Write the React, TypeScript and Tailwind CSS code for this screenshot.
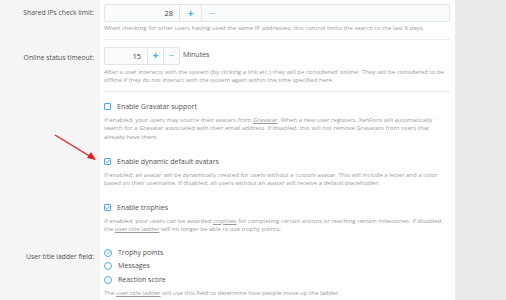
const font = "font-['Segoe_UI','Open_Sans','Noto_Sans',sans-serif]";

const Label = ({ children }: { children?: React.ReactNode }) => (
  <div className="w-[100px] shrink-0 bg-[#f5f5f5] pr-[6px] text-right text-[6.8px] text-[#505050]">{children}</div>
);

const Desc = ({ children, className = "" }: { children: React.ReactNode; className?: string }) => (
  <p className={`text-[6.05px] leading-[8.6px] text-[#9a9a9a] ${className}`}>{children}</p>
);

const U = ({ children }: { children: React.ReactNode }) => (
  <span className="inline-block h-[8.6px] leading-[8.6px] underline">{children}</span>
);

const Check = ({ on }: { on?: boolean }) => (
  <span className="flex h-[7px] w-[7px] items-center justify-center rounded-[1px] border border-[#47a7eb] bg-white">
    {on && (
      <svg viewBox="0 0 8 8" className="h-[5px] w-[5px]">
        <path d="M1 4.2 L3.2 6.2 L7 1.8" fill="none" stroke="#47a7eb" strokeWidth="1.4" />
      </svg>
    )}
  </span>
);

const Radio = ({ on }: { on?: boolean }) => (
  <span className="flex h-[8px] w-[8px] items-center justify-center rounded-full border border-[#47a7eb] bg-white">
    {on && (
      <svg viewBox="0 0 8 8" className="h-[5px] w-[5px]">
        <path d="M1.2 4.2 L3.2 6 L6.8 2" fill="none" stroke="#47a7eb" strokeWidth="1.3" />
      </svg>
    )}
  </span>
);

const Spinner = ({ value, numW, btnW }: { value: string; numW: string; btnW: string }) => (
  <div className="flex h-[18px] rounded-[2px] border border-[#e1e4e9] bg-[#fafbfd] text-[7.5px]">
    <div className={`${numW} pr-[6px] text-right leading-[16px] text-[#404040]`}>{value}</div>
    <div className={`${btnW} flex items-center justify-center border-l border-[#e1e4e9] text-[10px] font-bold text-[#47a7eb]`}>+</div>
    <div className={`${btnW} flex items-center justify-center border-l border-[#e1e4e9] text-[10px] font-bold text-[#9fcdf0]`}>−</div>
  </div>
);

export default function App() {
  return (
    <div className={`relative flex h-[300px] w-[506px] overflow-hidden bg-[#ebebeb] ${font}`}>
      <div className="w-[455px] shrink-0">
        <div className="flex">
          <Label><div className="pt-[8px]">Shared IPs check limit:</div></Label>
          <div className="flex-1 bg-white pl-[4px] pr-[5px] pt-[4px]">
            <div className="border-b border-[#ededed] pb-[6px]">
              <Spinner value="28" numW="w-[74px]" btnW="w-[22px]" />
              <Desc className="mt-[2px]">When checking for other users having used the same IP addresses, this control limits the search to the last X days.</Desc>
            </div>
          </div>
        </div>
        <div className="flex">
          <Label><div className="pt-[13px]">Online status timeout:</div></Label>
          <div className="flex-1 bg-white pl-[4px] pr-[5px] pt-[7px]">
            <div className="border-b border-[#ededed] pb-[6px]">
              <div className="flex items-center gap-[3px]">
                <Spinner value="15" numW="w-[42px]" btnW="w-[16px]" />
                <span className="text-[7px] text-[#505050]">Minutes</span>
              </div>
              <Desc className="mt-[3px]">After a user interacts with the system (by clicking a link etc.) they will be considered 'online'. They will be considered to be offline if they do not interact with the system again within the time specified here.</Desc>
            </div>
          </div>
        </div>
        <div className="flex">
          <Label />
          <div className="flex-1 bg-white pl-[4px] pr-[5px] pt-[10px]">
            <div className="flex items-center gap-[6px] text-[7px] leading-[10px] text-[#505050]">
              <Check />
              <span>Enable Gravatar support</span>
            </div>
            <Desc className="mt-[4px]">If enabled, your users may source their avatars from <U>Gravatar</U>. When a new user registers, XenForo will automatically search for a Gravatar associated with their email address. If disabled, this will not remove Gravatars from users that already have them.</Desc>
            <div className="mt-[15px] flex items-center gap-[6px] text-[7px] leading-[10px] text-[#505050]">
              <Check on />
              <span>Enable dynamic default avatars</span>
            </div>
            <Desc className="mt-[4px]">If enabled, an avatar will be dynamically created for users without a custom avatar. This will include a letter and a color based on their username. If disabled, all users without an avatar will receive a default placeholder.</Desc>
            <div className="mt-[15px] flex items-center gap-[6px] text-[7px] leading-[10px] text-[#505050]">
              <Check on />
              <span>Enable trophies</span>
            </div>
            <Desc className="mt-[4px]">If enabled, your users can be awarded <U>trophies</U> for completing certain actions or reaching certain milestones. If disabled, the <U>user title ladder</U> will no longer be able to use trophy points.</Desc>
          </div>
        </div>
        <div className="flex">
          <Label><div className="pt-[18px]">User title ladder field:</div></Label>
          <div className="flex-1 bg-white pl-[4px] pr-[5px] pt-[14px]">
            <div className="flex flex-col gap-[3.5px] text-[7px] leading-[10px] text-[#505050]">
              <div className="flex items-center gap-[6px]"><Radio on /><span>Trophy points</span></div>
              <div className="flex items-center gap-[6px]"><Radio /><span>Messages</span></div>
              <div className="flex items-center gap-[6px]"><Radio /><span>Reaction score</span></div>
            </div>
            <Desc className="mt-[4px] pb-[10px]">The <U>user title ladder</U> will use this field to determine how people move up the ladder.</Desc>
          </div>
        </div>
      </div>
      <svg className="absolute left-0 top-0" width="120" height="180" viewBox="0 0 120 180">
        <line x1="55" y1="135" x2="91" y2="157" stroke="#e02020" strokeWidth="1.3" />
        <path d="M96 160 L87 158 L91 152 Z" fill="#e02020" />
      </svg>
    </div>
  );
}
